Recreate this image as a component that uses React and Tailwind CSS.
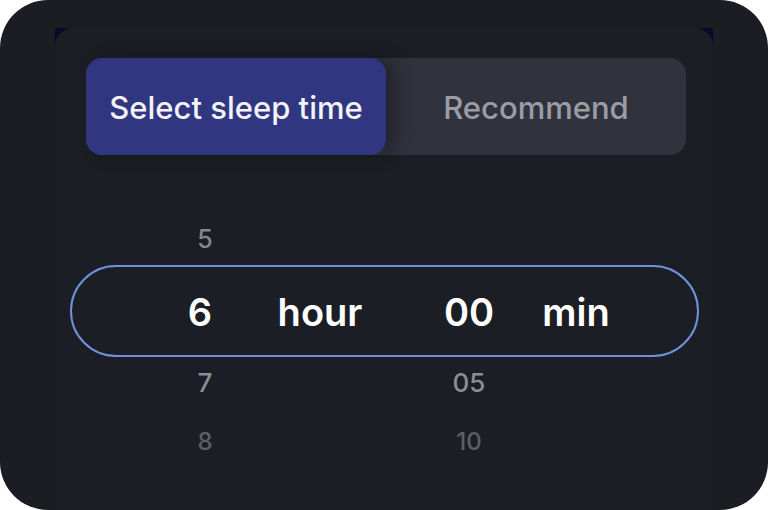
import React from 'react'

const font = { fontFamily: 'Inter, "Noto Sans", sans-serif' }

function Row({ h, hour, min, className }) {
  return (
    <div className={`flex items-center ${className}`} style={{ height: h }}>
      <div className="w-[100px] text-center ml-[100px]">{hour}</div>
      <div className="w-[164px]" />
      <div className="w-[100px] text-center">{min}</div>
    </div>
  )
}

function App() {
  return (
    <div className="w-[768px] h-[510px] bg-white" style={font}>
      <div className="w-full h-full rounded-[48px] bg-[#1b1d23] pt-[28px] px-[55px] overflow-hidden">
        <div className="h-full bg-[#060a26] rounded-t-[2px]">
          <div className="h-full bg-[#1b1e24] rounded-t-[18px] pt-[30px]">
            {/* tabs */}
            <div className="ml-[31px] w-[600px] h-[97px] rounded-[16px] bg-[#30333e] flex">
              <button className="w-[300px] h-full pt-[3px] rounded-[16px] bg-[#303780] text-[#f2f2f7] text-[31px] font-medium shadow-[10px_0_18px_rgba(0,0,0,0.3)]">
                Select sleep time
              </button>
              <button className="flex-1 h-full pt-[3px] text-[#9b9da4] text-[31px] font-medium">
                Recommend
              </button>
            </div>

            {/* picker */}
            <div className="relative mt-[55px]">
              <Row h={60} hour="5" min="" className="text-[25px] font-medium text-[#85878d]" />
              <div className="relative flex items-center h-[84px] text-[38px] font-semibold text-white">
                <div className="absolute left-[15px] right-[14px] top-[-5px] bottom-[-3px] rounded-full border-2 border-[#7190dc]" />
                <div className="w-[100px] text-center ml-[95px]">6</div>
                <div className="w-[140px] text-center">hour</div>
                <div className="w-[29px]" />
                <div className="w-[100px] text-center">00</div>
                <div className="w-[7px]" />
                <div className="w-[100px] text-center">min</div>
              </div>
              <Row h={56} hour="7" min="05" className="text-[26px] font-medium text-[#8c8e94]" />
              <Row h={64} hour="8" min="10" className="text-[24px] font-medium text-[#5d5f65]" />
            </div>
          </div>
        </div>
      </div>
    </div>
  )
}

export default App
